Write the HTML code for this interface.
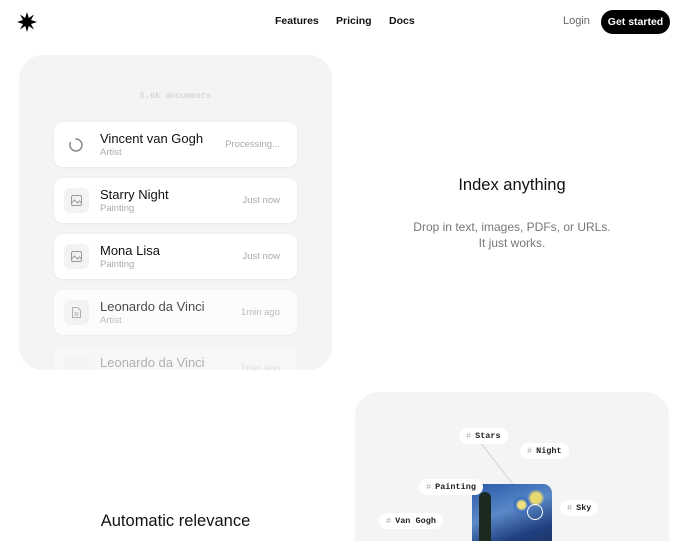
<!DOCTYPE html>
<html style="width:680px;height:541px;overflow:hidden"><head><style>
*{margin:0;padding:0;box-sizing:border-box}
body{width:680px;height:541px;overflow:hidden;background:#fff;font-family:"Liberation Sans",sans-serif;position:relative;color:#111}
.a{position:absolute}
.nav{font-size:10.5px;font-weight:bold;color:#111}
.panel{background:#f4f4f4;border-radius:24px}
.card{position:absolute;left:35px;width:243px;height:45px;background:#fff;border-radius:9px;box-shadow:0 1px 3px rgba(0,0,0,.05)}
.card .t{position:absolute;left:46px;top:9px;font-size:13px;color:#111}
.card .s{position:absolute;left:46px;top:25px;font-size:9.5px;color:#aaa}
.card .r{position:absolute;right:17px;top:17px;font-size:9.5px;color:#aaa}
.card .ic{position:absolute;left:10px;top:10px;width:25px;height:25px;border-radius:6px;background:#f3f3f3}
.tag{position:absolute;background:#fff;border-radius:10px;font-family:"Liberation Mono",monospace;font-size:8.5px;font-weight:bold;padding:3px 7px;color:#222}
.tag i{font-style:normal;color:#aaa;font-weight:normal;margin-right:4px}
</style></head><body>
<svg class="a" style="left:17px;top:12px" width="20" height="20" viewBox="0 0 20 20"><polygon fill="#000" points="10,0 11.8,6 17,2.5 14,8 20,10 14,12 17,17.5 11.8,14 10,20 8.2,14 3,17.5 6,12 0,10 6,8 3,2.5 8.2,6"/></svg>
<div class="a nav" style="left:275px;top:15px">Features</div>
<div class="a nav" style="left:336px;top:15px">Pricing</div>
<div class="a nav" style="left:389px;top:15px">Docs</div>
<div class="a" style="left:563px;top:15px;font-size:11px;color:#666">Login</div>
<div class="a" style="left:601px;top:10px;width:69px;height:24px;background:#000;border-radius:12px;color:#fff;font-size:10.5px;font-weight:bold;text-align:center;line-height:24px">Get started</div>

<div class="a panel" style="left:19px;top:55px;width:313px;height:315px;overflow:hidden">
 <div class="a" style="left:0;width:313px;top:36px;text-align:center;font-family:'Liberation Mono',monospace;font-size:8.5px;color:#ccc">5.6k documents</div>
 <div class="card" style="top:67px"><svg class="a" style="left:14px;top:15px" width="16" height="16" viewBox="0 0 16 16"><path d="M8 2 A6 6 0 1 1 2.5 5.5" fill="none" stroke="#888" stroke-width="1.5" stroke-linecap="round"/></svg><div class="t">Vincent van Gogh</div><div class="s">Artist</div><div class="r">Processing...</div></div>
 <div class="card" style="top:123px"><div class="ic"><svg width="25" height="25" viewBox="0 0 25 25"><rect x="7.5" y="7.5" width="10" height="10" rx="1.5" fill="none" stroke="#999"/><path d="M7.5 15l3-3 3 3 2-2 2 2" fill="none" stroke="#999"/></svg></div><div class="t">Starry Night</div><div class="s">Painting</div><div class="r">Just now</div></div>
 <div class="card" style="top:179px"><div class="ic"><svg width="25" height="25" viewBox="0 0 25 25"><rect x="7.5" y="7.5" width="10" height="10" rx="1.5" fill="none" stroke="#999"/><path d="M7.5 15l3-3 3 3 2-2 2 2" fill="none" stroke="#999"/></svg></div><div class="t">Mona Lisa</div><div class="s">Painting</div><div class="r">Just now</div></div>
 <div class="card" style="top:235px;opacity:.75"><div class="ic"><svg width="25" height="25" viewBox="0 0 25 25"><path d="M8.5 7.5h5l3 3v7h-8z" fill="none" stroke="#999"/><path d="M10.5 13h4M10.5 15h4" stroke="#999"/></svg></div><div class="t">Leonardo da Vinci</div><div class="s">Artist</div><div class="r">1min ago</div></div>
 <div class="card" style="top:291px;opacity:.3"><div class="ic"></div><div class="t">Leonardo da Vinci</div><div class="r">1min ago</div></div>
</div>

<div class="a" style="left:355px;width:314px;top:176px;text-align:center;font-size:16.5px;color:#111">Index anything</div>
<div class="a" style="left:355px;width:314px;top:219px;text-align:center;font-size:12px;color:#777;line-height:16px">Drop in text, images, PDFs, or URLs.<br>It just works.</div>

<div class="a" style="left:19px;width:313px;top:512px;text-align:center;font-size:16.5px;color:#111">Automatic relevance</div>

<div class="a panel" style="left:355px;top:392px;width:314px;height:149px;overflow:hidden;border-radius:24px 24px 0 0">
 <svg class="a" style="left:0;top:0" width="314" height="149"><line x1="125" y1="50" x2="178" y2="118" stroke="#ccc" stroke-width="0.8"/></svg>
 <div class="a" style="left:117px;top:92px;width:80px;height:70px;border-radius:9px;overflow:hidden;background:radial-gradient(circle at 62% 30%,#f0e080 0 5%,#3a6fc0 9%,transparent 14%),radial-gradient(circle at 80% 20%,#e8d870 0 6%,transparent 10%),linear-gradient(160deg,#2a58a8,#5a88c8 40%,#1f3f80 70%,#20305a);"><div class="a" style="left:7px;top:8px;width:12px;height:62px;background:#1a2a20;border-radius:6px 6px 0 0"></div></div>
 <div class="a" style="left:172px;top:112px;width:16px;height:16px;border-radius:50%;border:1.5px solid #fff"></div>
 <div class="tag" style="left:104px;top:36px"><i>#</i>Stars</div>
 <div class="tag" style="left:165px;top:51px"><i>#</i>Night</div>
 <div class="tag" style="left:64px;top:87px"><i>#</i>Painting</div>
 <div class="tag" style="left:205px;top:108px"><i>#</i>Sky</div>
 <div class="tag" style="left:24px;top:121px"><i>#</i>Van Gogh</div>
</div>
</body></html>
